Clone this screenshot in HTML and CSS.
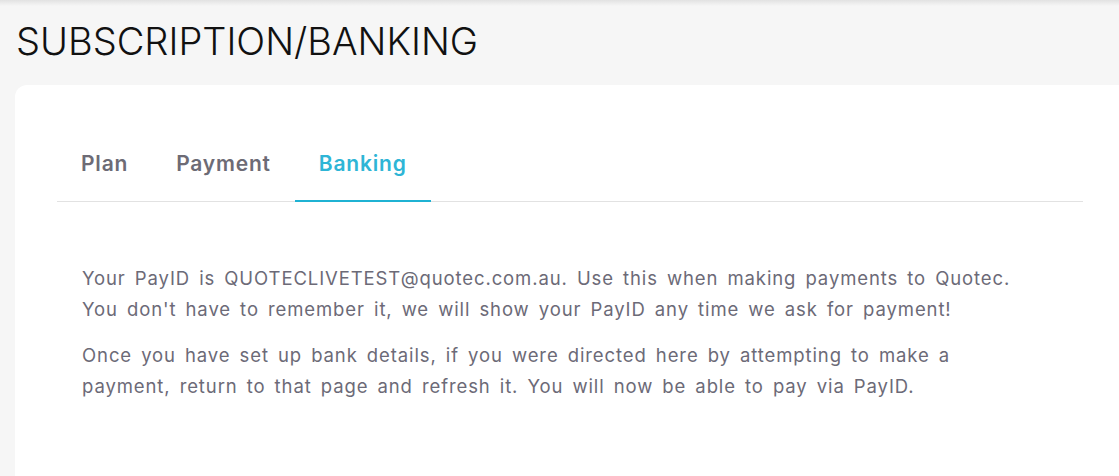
FILE: index.html
```html
<!DOCTYPE html>
<html lang="en">
<head>
<meta charset="utf-8">
<title>Subscription / Banking</title>
<link rel="stylesheet" href="styles.css">
</head>
<body>
<div class="topshadow"></div>
<main class="page">
  <h1 class="page-title">SUBSCRIPTION/BANKING</h1>
  <section class="card">
    <nav class="tabs">
      <a class="tab">Plan</a>
      <a class="tab">Payment</a>
      <a class="tab active">Banking</a>
    </nav>
    <div class="content">
      <p>Your PayID is QUOTECLIVETEST@quotec.com.au. Use this when making payments to Quotec. You don't have to remember it, we will show your PayID any time we ask for payment!</p>
      <p>Once you have set up bank details, if you were directed here by attempting to make a payment, return to that page and refresh it. You will now be able to pay via PayID.</p>
    </div>
  </section>
</main>
</body>
</html>
```
FILE: styles.css
```css
* { box-sizing: border-box; }
html, body {
  margin: 0;
  padding: 0;
  height: 100%;
  overflow: hidden;
}
body {
  background: #f6f6f6;
  font-family: Inter, "Noto Sans", sans-serif;
  position: relative;
}
.topshadow {
  position: absolute;
  left: 0; right: 0; top: 0;
  height: 6px;
  background: linear-gradient(#e2e2e2, #f6f6f6);
}
.page {
  padding: 18px 0 0 15px;
}
.page-title {
  margin: 0 0 0 1px;
  font-weight: 300;
  font-size: 38px;
  line-height: 46px;
  color: #111;
}
.card {
  margin-top: 21px;
  background: #fff;
  border-radius: 12px 0 0 0;
  padding: 52px 36px 0 42px;
  height: 400px;
}
.tabs {
  display: flex;
  border-bottom: 1px solid #e2e2e2;
}
.tab {
  padding: 14px 24px 23px;
  font-size: 21px;
  font-weight: 600;
  letter-spacing: 0.8px;
  color: #6d6b75;
  line-height: 26px;
  margin-bottom: -1px;
  border-bottom: 2px solid transparent;
}
.tab.active {
  color: #2eb5d6;
  border-bottom-color: #1fb2d3;
}
.content {
  padding: 61px 0 0 25px;
}
.content p {
  margin: 0 0 15px;
  width: 940px;
  font-size: 18.5px;
  letter-spacing: 0.9px;
  word-spacing: 3px;
  line-height: 31px;
  color: #6c6a77;
}
```
